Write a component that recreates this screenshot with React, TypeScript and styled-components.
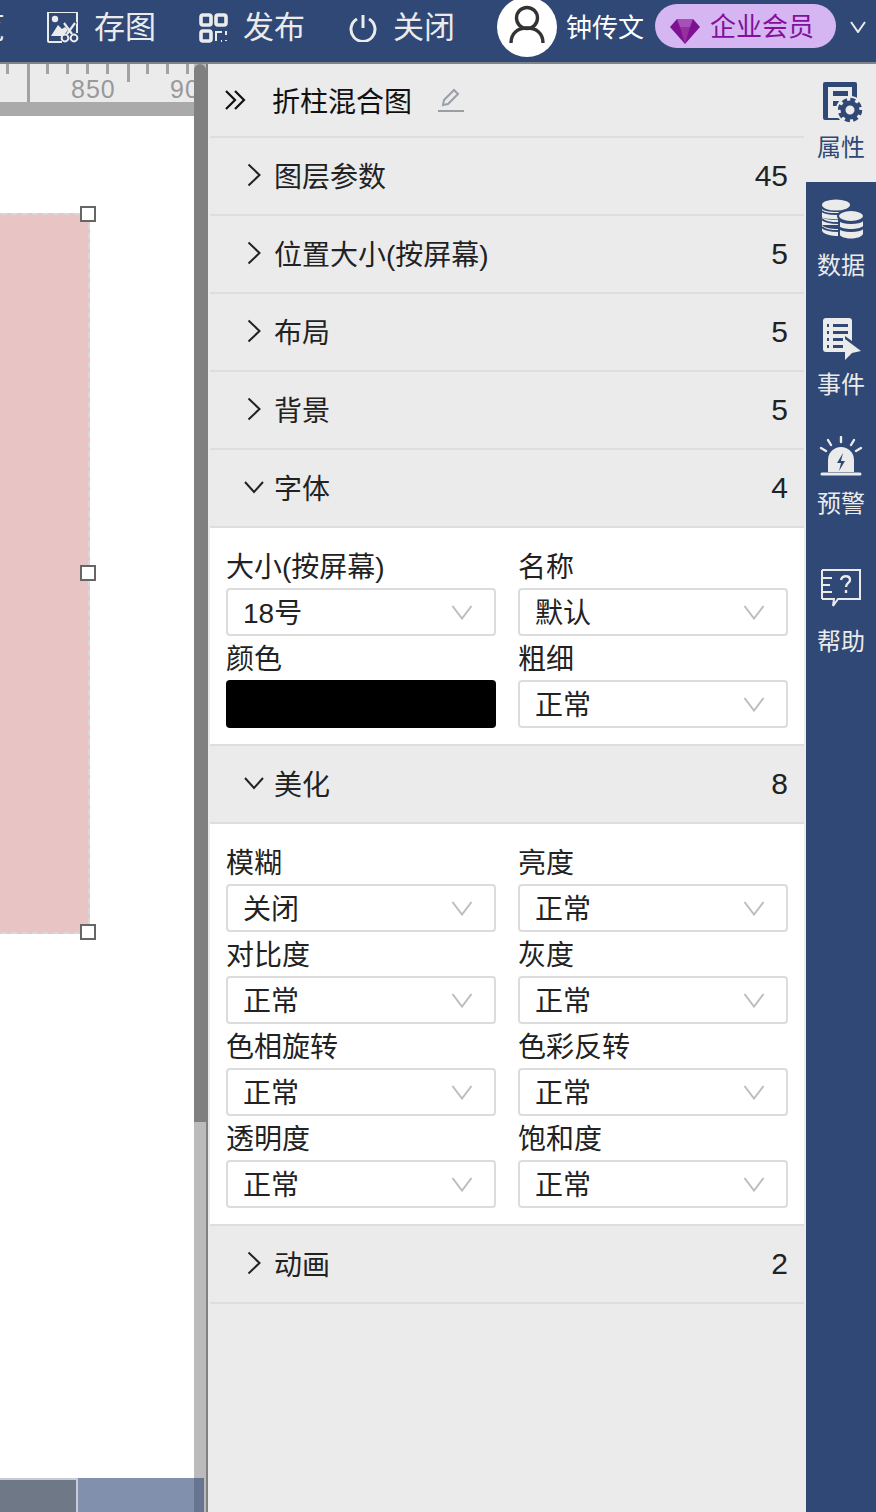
import * as React from 'react'
import styled, { createGlobalStyle } from 'styled-components'

const NAVY = '#2f4875'
const FONT = '"Liberation Sans", "Noto Sans CJK SC", sans-serif'

const GlobalStyle = createGlobalStyle`
  html, body {
    margin: 0;
    padding: 0;
    background: #ebebeb;
    font-family: ${FONT};
  }
  * {
    box-sizing: border-box;
  }
`

const Page = styled.div`
  display: flex;
  flex-direction: column;
  width: 876px;
  height: 1512px;
  overflow: hidden;
`

const TopBar = styled.header`
  display: flex;
  align-items: center;
  flex: 0 0 64px;
  height: 64px;
  background: ${NAVY};
  border-bottom: 2px solid #808388;
  color: #ebebeb;
  overflow: hidden;
`

const CutLabel = styled.span`
  flex: 0 0 5px;
  margin-top: -6px;
  overflow: hidden;
  direction: rtl;
  font-size: 31px;
  line-height: 54px;
`

const ToolItem = styled.div<{ $left: number; $gap: number }>`
  display: flex;
  align-items: center;
  gap: ${(p) => p.$gap}px;
  margin: -6px 0 0 ${(p) => p.$left}px;
  font-size: 31px;
  line-height: 54px;
  white-space: nowrap;
`

const Avatar = styled.div`
  display: flex;
  align-items: center;
  justify-content: center;
  flex: 0 0 60px;
  height: 60px;
  margin: -8px 0 0 42px;
  background: #fff;
  border-radius: 50%;
`

const UserName = styled.span`
  margin: -12px 0 0 9px;
  font-size: 26px;
  color: #fff;
  white-space: nowrap;
`

const VipPill = styled.div`
  display: flex;
  align-items: center;
  gap: 10px;
  width: 181px;
  height: 44px;
  margin: -10px 0 0 11px;
  padding-left: 15px;
  background: #d5b6f2;
  border-radius: 22px;
  color: #83109c;
  font-size: 26px;
  white-space: nowrap;
`

const VipGem = styled.svg`
  margin-top: 9px;
`

const VipText = styled.span`
  margin-top: -4px;
`

const MenuCaret = styled.svg`
  margin: -8px 0 0 14px;
`

const Body = styled.div`
  display: flex;
  flex: 1;
  min-height: 0;
`

const Workspace = styled.div`
  position: relative;
  flex: 0 0 208px;
  display: flex;
  flex-direction: column;
  background: #fff;
  border-right: 2px solid #808080;
  overflow: hidden;
`

const Ruler = styled.div`
  position: relative;
  flex: 0 0 38px;
  width: 194px;
  background: #ebebeb;
  overflow: hidden;
`

const Tick = styled.i<{ $x: number; $h: number }>`
  position: absolute;
  top: 0;
  left: ${(p) => p.$x}px;
  width: 3px;
  height: ${(p) => p.$h}px;
  background: #a2a2a2;
`

const RulerNum = styled.span<{ $x: number }>`
  position: absolute;
  top: 10px;
  left: ${(p) => p.$x}px;
  color: #999;
  font-size: 25px;
  line-height: 30px;
  letter-spacing: 1px;
`

const RulerEdge = styled.div`
  flex: 0 0 14px;
  width: 194px;
  background: #aaa;
`

const Scrollbar = styled.div`
  position: absolute;
  top: 0;
  right: 0;
  width: 12px;
  height: 100%;
  background: #bbb;
`

const ScrollThumb = styled.div`
  height: 1058px;
  background: #808080;
  border-radius: 6px 6px 0 0;
`

const ChartBox = styled.div`
  position: absolute;
  left: -20px;
  top: 149px;
  width: 110px;
  height: 721px;
  background: #e8c4c4;
  border: 2px dashed #d8d8d8;
`

const Handle = styled.i<{ $y: number }>`
  position: absolute;
  left: 80px;
  top: ${(p) => p.$y}px;
  width: 16px;
  height: 16px;
  background: #fff;
  border: 2px solid #666;
`

const TileGray = styled.div`
  position: absolute;
  left: 0;
  top: 1414px;
  width: 78px;
  height: 40px;
  background: #6f7886;
  border-top: 2px solid #c5ccd8;
  border-right: 2px solid #c5ccd8;
`

const TileBlue = styled.div`
  position: absolute;
  left: 78px;
  top: 1414px;
  width: 126px;
  height: 40px;
  background: linear-gradient(to right, #8090ad 116px, #677590 116px);
`

const Panel = styled.main`
  flex: 1;
  display: flex;
  flex-direction: column;
  padding: 0 2px;
  background: #ebebeb;
  color: #222;
`

const PanelHead = styled.div`
  display: flex;
  align-items: center;
  flex: 0 0 74px;
  padding-left: 13px;
  border-bottom: 2px solid #dedede;
  font-size: 28px;
  color: #111;
`

const PanelTitle = styled.span`
  margin: 0 26px 0 25px;
`

const SectionHead = styled.div`
  display: flex;
  align-items: center;
  height: 78px;
  padding: 0 16px 2px 33px;
  border-bottom: 2px solid #dedede;
  font-size: 28px;
`

const ChevronSlot = styled.span`
  display: flex;
  align-items: center;
  justify-content: center;
  flex: 0 0 22px;
  margin-right: 9px;
`

const SectionName = styled.span`
  flex: 1;
`

const SectionCount = styled.span`
  margin-top: 2px;
  font-size: 30px;
`

const SectionBody = styled.div`
  display: grid;
  grid-template-columns: 270px 270px;
  column-gap: 22px;
  padding: 16px;
  background: #fff;
  border-bottom: 2px solid #dedede;
`

const Field = styled.label`
  display: block;
`

const FieldLabel = styled.div`
  height: 44px;
  font-size: 28px;
  line-height: 48px;
  color: #222;
`

const SelectBox = styled.div`
  display: flex;
  align-items: center;
  justify-content: space-between;
  height: 48px;
  padding: 0 21px 2px 15px;
  background: #fff;
  border: 2px solid #dcdcdc;
  border-radius: 4px;
  font-size: 28px;
  color: #222;
`

const SelectCaret = styled.svg`
  margin-top: 2px;
`

const ColorSwatch = styled.div`
  height: 48px;
  background: #000;
  border-radius: 4px;
`

const Rail = styled.nav`
  flex: 0 0 70px;
  background: ${NAVY};
`

const RailTab = styled.div<{ $active?: boolean; $gap?: number }>`
  display: flex;
  flex-direction: column;
  align-items: center;
  height: ${(p) => (p.$active ? 118 : 119)}px;
  margin-top: ${(p) => p.$gap || 0}px;
  padding-top: 16px;
  background: ${(p) => (p.$active ? '#ebebeb' : NAVY)};
  color: ${(p) => (p.$active ? NAVY : '#ebebeb')};
  font-size: 24px;
  line-height: 30px;
`

const RailIcon = styled.svg<{ $after?: number }>`
  display: block;
  width: 44px;
  height: 44px;
  margin-bottom: ${(p) => p.$after || 9}px;
`

const Chevron = ({ open }: { open?: boolean }) =>
  open ? (
    <svg width="22" height="16" viewBox="0 0 22 16" fill="none">
      <path d="M2 3l9 10 9-10" stroke="#222" strokeWidth="2" />
    </svg>
  ) : (
    <svg width="16" height="26" viewBox="0 0 16 26" fill="none">
      <path d="M2.5 2.5l11 10.5-11 10.5" stroke="#222" strokeWidth="2" />
    </svg>
  )

const Select = ({ value }: { value: string }) => (
  <SelectBox>
    {value}
    <SelectCaret width="22" height="16" viewBox="0 0 22 16" fill="none">
      <path d="M1.5 2L11 14.5 20.5 2" stroke="#bdbdbd" strokeWidth="2" />
    </SelectCaret>
  </SelectBox>
)

const Section = ({ name, count, open, children }: { name: string; count: number; open?: boolean; children?: React.ReactNode }) => (
  <>
    <SectionHead>
      <ChevronSlot>
        <Chevron open={open} />
      </ChevronSlot>
      <SectionName>{name}</SectionName>
      <SectionCount>{count}</SectionCount>
    </SectionHead>
    {children && <SectionBody>{children}</SectionBody>}
  </>
)

const beautify = [
  ['模糊', '关闭'],
  ['亮度', '正常'],
  ['对比度', '正常'],
  ['灰度', '正常'],
  ['色相旋转', '正常'],
  ['色彩反转', '正常'],
  ['透明度', '正常'],
  ['饱和度', '正常']
]

const minorTicks = [7, 47, 67, 87, 107, 147, 167, 187]

export default function App() {
  return (
    <Page>
      <GlobalStyle />
      <TopBar>
        <CutLabel>览</CutLabel>
        <ToolItem $left={42} $gap={15}>
          <svg width="32" height="32" viewBox="0 1 32 32" fill="none" stroke="#ebebeb" strokeWidth="2">
            <path d="M15 31H2a1 1 0 0 1-1-1V2a1 1 0 0 1 1-1h27a1 1 0 0 1 1 1v20" />
            <circle cx="8" cy="8" r="3.2" fill="#ebebeb" stroke="none" />
            <path d="M4 25l7-11 4 4 3-2 3 3-5 6z" fill="#ebebeb" stroke="none" />
            <path d="M19 24L28 11M26 24L16 11" strokeWidth="2.4" stroke={NAVY} transform="translate(1 0)" />
            <path d="M20 23l8-11M25 23l-8-11" strokeWidth="2.2" />
            <circle cx="18" cy="27" r="3.4" fill={NAVY} />
            <circle cx="27" cy="27" r="3.4" fill={NAVY} />
          </svg>
          存图
        </ToolItem>
        <ToolItem $left={43} $gap={15}>
          <svg width="29" height="30" viewBox="0 0 29 30" fill="none" stroke="#ebebeb" strokeWidth="3.6">
            <rect x="2" y="2" width="10" height="10" rx="2" />
            <rect x="17" y="2" width="10" height="10" rx="2" />
            <rect x="2" y="18" width="10" height="10" rx="2" />
            <path d="M17 28v-9h6M27 18v4M22 28h1M27 27v1" strokeWidth="2" />
          </svg>
          发布
        </ToolItem>
        <ToolItem $left={44} $gap={16}>
          <svg width="28" height="28" viewBox="0 0 28 28" fill="none" stroke="#ebebeb" strokeWidth="3">
            <path d="M8 5a12 12 0 1 0 12 0" />
            <path d="M14 1v13" />
          </svg>
          关闭
        </ToolItem>
        <Avatar>
          <svg width="36" height="44" viewBox="0 0 36 44" fill="none" stroke="#333" strokeWidth="3.4">
            <circle cx="18" cy="13" r="10.5" />
            <path d="M2 38c0-10 7-15 16-15s16 5 16 15" />
          </svg>
        </Avatar>
        <UserName>钟传文</UserName>
        <VipPill>
          <VipGem width="30" height="26" viewBox="0 0 30 26">
            <path d="M7 1h16l7 8-15 17L0 9z" fill="#7e1192" />
            <path d="M7 1h16l-3 8H10z" fill="#a650b8" />
            <path d="M10 9h10l-5 17z" fill="#96309f" />
          </VipGem>
          <VipText>企业会员</VipText>
        </VipPill>
        <MenuCaret width="16" height="12" viewBox="0 0 16 12" fill="none">
          <path d="M1 1l7 10 7-10" stroke="#ebebeb" strokeWidth="2" />
        </MenuCaret>
      </TopBar>
      <Body>
        <Workspace>
          <Ruler>
            <RulerNum $x={-14}>0</RulerNum>
            <Tick $x={27} $h={38} />
            {minorTicks.map((x) => (
              <Tick key={x} $x={x - 1} $h={10} />
            ))}
            <Tick $x={127} $h={18} />
            <RulerNum $x={71}>850</RulerNum>
            <RulerNum $x={170}>900</RulerNum>
          </Ruler>
          <RulerEdge />
          <ChartBox />
          <Handle $y={142} />
          <Handle $y={501} />
          <Handle $y={860} />
          <Scrollbar>
            <ScrollThumb />
          </Scrollbar>
          <TileGray />
          <TileBlue />
        </Workspace>
        <Panel>
          <PanelHead>
            <svg width="24" height="24" viewBox="0 0 24 24" fill="none" stroke="#111" strokeWidth="2.2">
              <path d="M3 3l9 9-9 9M12 3l9 9-9 9" />
            </svg>
            <PanelTitle>折柱混合图</PanelTitle>
            <svg width="26" height="26" viewBox="0 0 26 26" fill="none" stroke="#9a9fa6" strokeWidth="2">
              <path d="M5 18l1-5L16 3l4 4-10 10z" />
              <path d="M0 24h26" />
            </svg>
          </PanelHead>
          <Section name="图层参数" count={45} />
          <Section name="位置大小(按屏幕)" count={5} />
          <Section name="布局" count={5} />
          <Section name="背景" count={5} />
          <Section name="字体" count={4} open>
            <Field>
              <FieldLabel>大小(按屏幕)</FieldLabel>
              <Select value="18号" />
            </Field>
            <Field>
              <FieldLabel>名称</FieldLabel>
              <Select value="默认" />
            </Field>
            <Field>
              <FieldLabel>颜色</FieldLabel>
              <ColorSwatch />
            </Field>
            <Field>
              <FieldLabel>粗细</FieldLabel>
              <Select value="正常" />
            </Field>
          </Section>
          <Section name="美化" count={8} open>
            {beautify.map(([label, value]) => (
              <Field key={label}>
                <FieldLabel>{label}</FieldLabel>
                <Select value={value} />
              </Field>
            ))}
          </Section>
          <Section name="动画" count={2} />
        </Panel>
        <Rail>
          <RailTab $active>
            <RailIcon viewBox="0 0 44 44">
              <path d="M6 2h30a2 2 0 0 1 2 2v34a2 2 0 0 1-2 2H6a2 2 0 0 1-2-2V4a2 2 0 0 1 2-2z" fill={NAVY} />
              <path d="M9 7h24v31H9z" fill="#ebebeb" />
              <path d="M14 11h15v5H14zM14 21h7v5H14z" fill={NAVY} />
              <circle cx="31" cy="30" r="14" fill="#ebebeb" />
              <circle cx="31" cy="30" r="7" fill="none" stroke={NAVY} strokeWidth="5" />
              <circle cx="31" cy="30" r="10.5" fill="none" stroke={NAVY} strokeWidth="3.4" strokeDasharray="5 3.25" />
            </RailIcon>
            属性
          </RailTab>
          <RailTab>
            <RailIcon viewBox="0 0 44 44">
              <ellipse cx="17" cy="7" rx="14" ry="5.5" fill="#ebebeb" />
              <path d="M3 11c3 4 25 4 28 0v5H3zM3 19c3 4 25 4 28 0v4H3zM3 27c3 4 13 4 17 4v7C12 38 3 36 3 32z" fill="#ebebeb" />
              <path d="M3 16h28v3c-3 3-25 3-28 0zM3 23h17v4H3z" fill="#ebebeb" />
              <path d="M3 13c3 4 25 4 28 0M3 21c3 4 13 4 17 4M3 29c3 4 13 4 17 4" fill="none" stroke={NAVY} strokeWidth="2" />
              <ellipse cx="32" cy="18" rx="13" ry="6" fill="#ebebeb" stroke={NAVY} strokeWidth="2" />
              <path d="M20 22c3 4 21 4 24 0v6c-3 4-21 4-24 0zM20 30c3 4 21 4 24 0v6c-3 6-21 6-24 0z" fill="#ebebeb" />
              <path d="M20 20v18" stroke={NAVY} strokeWidth="2" />
              <path d="M20 22c3 4 21 4 24 0M20 30c3 4 21 4 24 0" fill="none" stroke={NAVY} strokeWidth="1.8" />
            </RailIcon>
            数据
          </RailTab>
          <RailTab>
            <RailIcon viewBox="0 0 44 44">
              <g transform="translate(2 0)">
                <path d="M5 1h23a3 3 0 0 1 3 3v20l-7-5v16H5a3 3 0 0 1-3-3V4a3 3 0 0 1 3-3z" fill="#ebebeb" />
                <path d="M6 7h2v3H6zM12 7h15v3H12zM6 14h2v3H6zM12 14h15v3H12zM6 21h2v3H6zM12 21h10v3H12zM6 28h2v3H6zM12 28h10v3H12z" fill={NAVY} />
                <path d="M24 22l16 12-9 2-7 7z" fill="#ebebeb" />
              </g>
            </RailIcon>
            事件
          </RailTab>
          <RailTab>
            <RailIcon viewBox="0 0 44 44">
              <path d="M9 36V24a13 13 0 0 1 26 0v12z" fill="#ebebeb" />
              <path d="M3 38h38" stroke="#ebebeb" strokeWidth="3" strokeLinecap="round" />
              <path d="M22 1v5M9 4l3 5M35 4l-3 5M2 12l5 3M42 12l-5 3" stroke="#ebebeb" strokeWidth="2.4" strokeLinecap="round" />
              <path d="M24 17l-6 10h4l-2 8 6-10h-4z" fill={NAVY} />
            </RailIcon>
            预警
          </RailTab>
          <RailTab $gap={13}>
            <RailIcon viewBox="0 0 44 44" $after={15}>
              <path d="M3 2h38v29H19l-5 7 1-7H3" fill="none" stroke="#ebebeb" strokeWidth="2" />
              <path d="M3 2v29M3 10h10M3 17h8M3 24h10" fill="none" stroke="#ebebeb" strokeWidth="2" />
              <path d="M22 12c1-5 9-5 9 0 0 3-4 3-4 7M27 22v3" fill="none" stroke="#ebebeb" strokeWidth="2.4" />
            </RailIcon>
            帮助
          </RailTab>
        </Rail>
      </Body>
    </Page>
  )
}
